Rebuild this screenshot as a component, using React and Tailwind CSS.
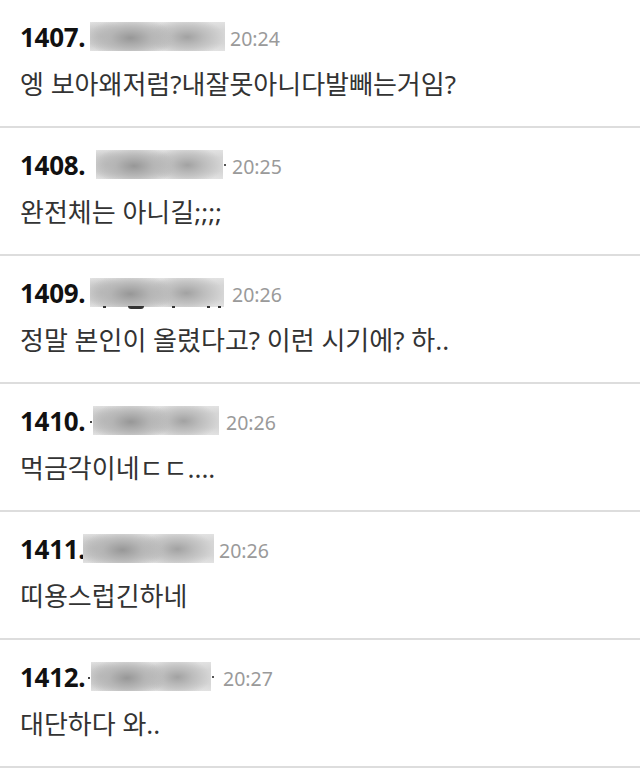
const comments = [
  { no: 1407, left: 90, width: 135, time: '20:24', gap: 5, text: '엥 보아왜저럼?내잘못아니다발빼는거임?' },
  { no: 1408, left: 96, width: 127, time: '20:25', gap: 9, text: '완전체는 아니길;;;;', dotRight: true },
  { no: 1409, left: 90, width: 134, time: '20:26', gap: 8, text: '정말 본인이 올렸다고? 이런 시기에? 하..', marks: true },
  { no: 1410, left: 93, width: 126, time: '20:26', gap: 7, text: '먹금각이네ㄷㄷ....', dotLeft: true },
  { no: 1411, left: 83, width: 131, time: '20:26', gap: 5, text: '띠용스럽긴하네' },
  { no: 1412, left: 91, width: 120, time: '20:27', gap: 12, text: '대단하다 와..', dotLeft: true, dotRight: true },
];

function Blurred({ width }) {
  return (
    <span
      className="relative block h-[29px] shrink-0 overflow-hidden bg-[#d6d6d6]"
      style={{ width }}
    >
      <span className="absolute inset-0 bg-[radial-gradient(ellipse_32%_70%_at_30%_55%,#979797_0%,#b4b4b4_45%,transparent_100%),radial-gradient(ellipse_28%_65%_at_72%_52%,#a2a2a2_0%,#bcbcbc_45%,transparent_100%),radial-gradient(ellipse_18%_55%_at_9%_50%,#bdbdbd_0%,transparent_100%),radial-gradient(ellipse_14%_50%_at_51%_50%,#c4c4c4_0%,transparent_100%),linear-gradient(180deg,#e2e2e2_0%,transparent_25%,transparent_75%,#e2e2e2_100%)]" />
    </span>
  );
}

function Row({ c }) {
  return (
    <div className="h-[128px] border-b-2 border-[#dddddd] pl-5 pr-5 pt-[22px]">
      <div className="flex h-[29px] items-center">
        <span className="w-[64px] shrink-0 text-[26px] font-bold leading-none tracking-[-0.3px] text-[#111111]">
          {c.no}.
        </span>
        <span className="relative flex items-center" style={{ marginLeft: c.left - 84 }}>
          {c.dotLeft && <span className="absolute -left-[3px] top-[15px] h-[2px] w-[2px] bg-[#444]" />}
          <Blurred width={c.width} />
          {c.dotRight && <span className="absolute -right-[3px] top-[14px] h-[2px] w-[2px] bg-[#555]" />}
          {c.marks && (
            <span className="absolute left-[13px] top-[28px] flex items-start">
              <span className="h-[2px] w-[3px] bg-[#333]" />
              <span className="ml-[22px] h-[3px] w-[16px] rounded-b-full bg-[#333]" />
              <span className="ml-[28px] h-[2px] w-[3px] bg-[#333]" />
              <span className="ml-[32px] h-[2px] w-[3px] bg-[#333]" />
              <span className="ml-[8px] h-[2px] w-[3px] bg-[#333]" />
            </span>
          )}
        </span>
        <span
          className="pt-[4px] text-[19.5px] leading-none text-[#9a9a9a]"
          style={{ marginLeft: c.gap }}
        >
          {c.time}
        </span>
      </div>
      <div className="mt-[16px] text-[26px] leading-[34px] text-[#333333]">{c.text}</div>
    </div>
  );
}

export default function App() {
  return (
    <div className="min-h-[772px] w-[640px] bg-white font-['Noto_Sans','Noto_Sans_CJK_KR',sans-serif]">
      {comments.map((c) => (
        <Row key={c.no} c={c} />
      ))}
    </div>
  );
}
